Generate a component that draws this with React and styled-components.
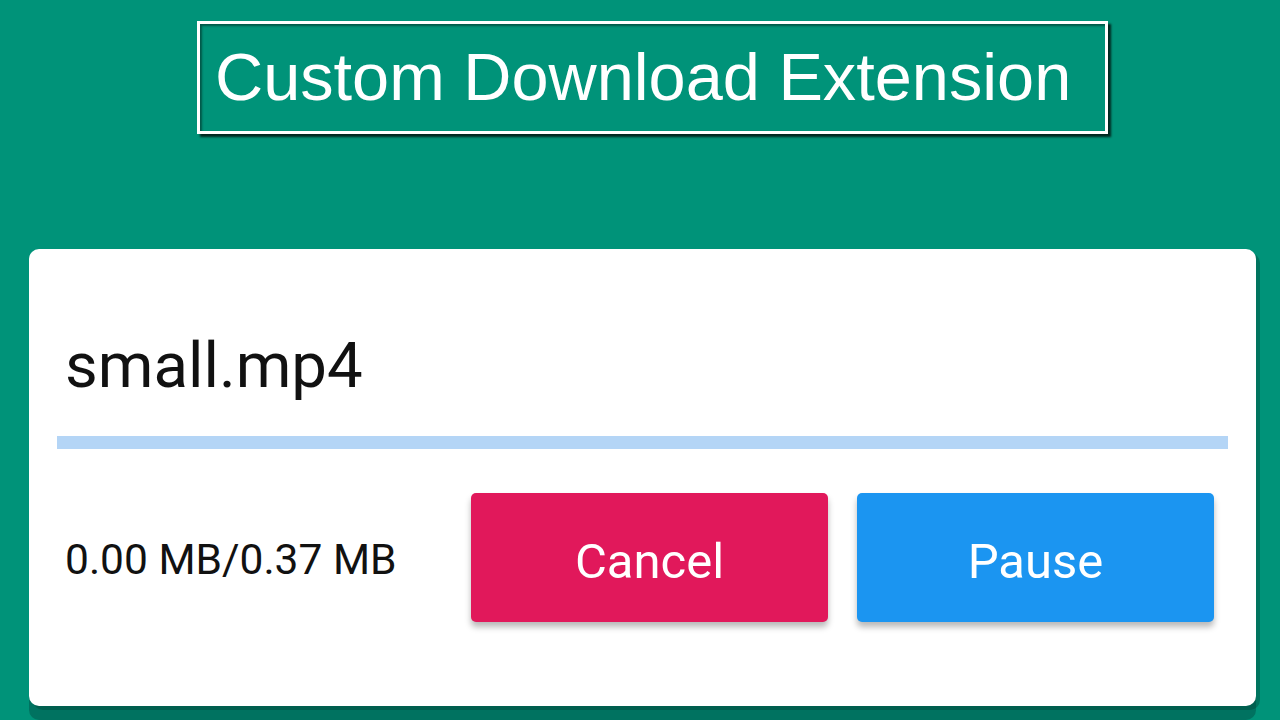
import React from "react";
import styled, { createGlobalStyle } from "styled-components";

const Global = createGlobalStyle`
  html, body { margin: 0; padding: 0; }
  body {
    background: #009379;
    width: 1280px;
    height: 720px;
    overflow: hidden;
    font-family: Roboto, "Liberation Sans", sans-serif;
  }
`;

const Page = styled.div`
  width: 1280px;
  height: 720px;
  display: flex;
  flex-direction: column;
  align-items: flex-start;
  background: #009379;
  overflow: hidden;
`;

const TitleBox = styled.div`
  margin: 21px 0 0 197px;
  width: 911px;
  height: 113px;
  box-sizing: border-box;
  border: 3px solid #ffffff;
  padding: 20px 0 0 15px;
  box-shadow: 3px 3px 2px rgba(0, 20, 15, 0.85), inset 2px 2px 2px rgba(0, 30, 25, 0.5);
`;

const TitleText = styled.h1`
  margin: 0;
  font-family: "Liberation Sans", Arial, sans-serif;
  font-weight: 400;
  font-size: 66.7px;
  line-height: 67px;
  color: #ffffff;
  white-space: nowrap;
`;

const Card = styled.div`
  margin: 115px 0 0 29px;
  width: 1227px;
  height: 457px;
  box-sizing: border-box;
  background: #ffffff;
  border-radius: 10px;
  padding: 85px 28px 0 28px;
  display: flex;
  flex-direction: column;
  box-shadow: 4px 4px 0 rgba(0, 60, 50, 0.35), 0 14px 0 rgba(0, 40, 40, 0.3);
`;

const FileName = styled.div`
  padding-left: 8px;
  font-family: Roboto, sans-serif;
  font-size: 63.5px;
  line-height: 64px;
  color: #111111;
`;

const Track = styled.div`
  margin-top: 38px;
  height: 13px;
  width: 100%;
  background: #b4d5f6;
`;

const Bottom = styled.div`
  margin-top: 44px;
  display: flex;
  align-items: center;
  padding-right: 14px;
`;

const Size = styled.div`
  flex: 1;
  padding: 4px 0 0 8px;
  font-family: Roboto, sans-serif;
  font-size: 42.5px;
  line-height: 43px;
  color: #111111;
  white-space: nowrap;
`;

const Buttons = styled.div`
  display: flex;
  gap: 29px;
`;

const Button = styled.button`
  width: 357px;
  height: 129px;
  border: none;
  border-radius: 5px;
  background: ${(p) => p.$bg};
  color: #ffffff;
  font-family: Roboto, sans-serif;
  font-size: 49px;
  line-height: 49px;
  padding: 8px 0 0 0;
  box-shadow: 0 5px 6px rgba(0, 0, 0, 0.28);
  cursor: pointer;
`;

export default function App() {
  return (
    <>
      <Global />
      <Page>
        <TitleBox>
          <TitleText>Custom Download Extension</TitleText>
        </TitleBox>
        <Card>
          <FileName>small.mp4</FileName>
          <Track />
          <Bottom>
            <Size>0.00 MB/0.37 MB</Size>
            <Buttons>
              <Button $bg="#e1185b">Cancel</Button>
              <Button $bg="#1b95f1">Pause</Button>
            </Buttons>
          </Bottom>
        </Card>
      </Page>
    </>
  );
}
